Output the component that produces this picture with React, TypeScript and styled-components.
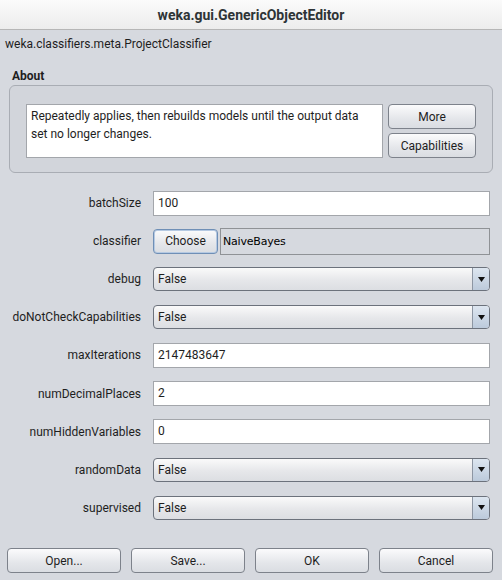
import React from 'react';
import styled, { createGlobalStyle } from 'styled-components';

const GlobalStyle = createGlobalStyle`
  html, body {
    margin: 0;
    padding: 0;
    background: #d6d9df;
  }
  body {
    font-family: Roboto, "Liberation Sans", sans-serif;
    font-size: 12px;
    color: #1e1e1e;
  }
`

const Window = styled.div`
  width: 502px;
  height: 580px;
  display: flex;
  flex-direction: column;
  background: #d6d9df;
  overflow: hidden;
`
const TitleBar = styled.div`
  height: 29px;
  flex-shrink: 0;
  display: flex;
  align-items: center;
  justify-content: center;
  background: linear-gradient(#fbfbfb, #ececec);
  border-bottom: 1px solid #b6b6b6;
  font-weight: bold;
  font-size: 14px;
  color: #2e3436;
`
const ClassName = styled.div`
  height: 15px;
  line-height: 15px;
  margin-top: 7px;
  padding-left: 5px;
`
const SectionTitle = styled.div`
  margin-top: 17px;
  padding-left: 12px;
  font-weight: bold;
  height: 15px;
  line-height: 15px;
`
const AboutBox = styled.div`
  margin: 1px 9px 0 9px;
  height: 88px;
  box-sizing: border-box;
  border: 1px solid #a9adb4;
  border-radius: 6px;
  background: #d2d5db;
  display: flex;
  gap: 5px;
  padding: 18px 16px 0 16px;
`
const AboutText = styled.div`
  width: 357px;
  height: 54px;
  box-sizing: border-box;
  background: #fff;
  border: 1px solid #a3a6ab;
  padding: 2px 12px 0 4px;
  line-height: 18px;
`
const ButtonColumn = styled.div`
  display: flex;
  flex-direction: column;
  gap: 4px;
`
const Button = styled.button<{ $w?: number; $focused?: boolean }>`
  width: ${p => p.$w ?? 88}px;
  height: 25px;
  box-sizing: border-box;
  padding: 0;
  font-family: Roboto, "Liberation Sans", sans-serif;
  font-size: 12px;
  color: #1e1e1e;
  border: 1px solid ${p => (p.$focused ? '#6f8fb6' : '#7d828b')};
  box-shadow: ${p => (p.$focused ? 'inset 0 0 0 1px #b5c9e2' : 'none')};
  border-radius: 4px;
  background: linear-gradient(#fbfbfc, #e4e6ea 60%, #dadde2);
`
const PropGrid = styled.div`
  margin-top: 11px;
  display: grid;
  grid-template-columns: 141px 1fr;
  column-gap: 12px;
  grid-auto-rows: 38.1px;
  align-items: center;
  padding-right: 12px;
`
const Label = styled.div`
  text-align: right;
  white-space: nowrap;
`
const TextField = styled.div`
  height: 25px;
  box-sizing: border-box;
  background: #fff;
  border: 1px solid #a3a6ab;
  padding: 0 4px;
  line-height: 23px;
`
const ChooserRow = styled.div`
  display: flex;
  gap: 2px;
  align-items: center;
`
const ObjectField = styled.div`
  flex: 1;
  height: 27px;
  box-sizing: border-box;
  border: 1px solid #8f9296;
  background: #d6d9df;
  padding-left: 2px;
  line-height: 25px;
  font-family: "DejaVu Sans", sans-serif;
  font-size: 11px;
  letter-spacing: -0.2px;
  color: #000;
`
const Combo = styled.div`
  height: 24px;
  box-sizing: border-box;
  border: 1px solid #6c727c;
  border-radius: 4px;
  background: linear-gradient(#fafafa, #e6e7ea 55%, #dcdee2);
  display: flex;
  align-items: center;
  overflow: hidden;
`
const ComboText = styled.div`
  flex: 1;
  padding-left: 4px;
`
const ComboArrow = styled.div`
  width: 16px;
  height: 100%;
  border-left: 1px solid #8d96a3;
  background: linear-gradient(#dde6f0, #bccadb);
  display: flex;
  align-items: center;
  justify-content: center;
`
const Footer = styled.div`
  margin-top: auto;
  margin-bottom: 7px;
  padding: 0 9px 0 7px;
  display: flex;
  gap: 10px;
`

const Arrow = () => (
  <svg width="7" height="5" viewBox="0 0 7 5">
    <path d="M0 0H7L3.5 5Z" fill="#111" />
  </svg>
)

type Prop = { name: string; kind: 'text' | 'combo' | 'object'; value: string };

const props: Prop[] = [
  { name: 'batchSize', kind: 'text', value: '100' },
  { name: 'classifier', kind: 'object', value: 'NaiveBayes' },
  { name: 'debug', kind: 'combo', value: 'False' },
  { name: 'doNotCheckCapabilities', kind: 'combo', value: 'False' },
  { name: 'maxIterations', kind: 'text', value: '2147483647' },
  { name: 'numDecimalPlaces', kind: 'text', value: '2' },
  { name: 'numHiddenVariables', kind: 'text', value: '0' },
  { name: 'randomData', kind: 'combo', value: 'False' },
  { name: 'supervised', kind: 'combo', value: 'False' },
]

const Editor = (p: Prop) => {
  if (p.kind === 'text') return <TextField>{p.value}</TextField>
  if (p.kind === 'combo')
    return (
      <Combo>
        <ComboText>{p.value}</ComboText>
        <ComboArrow><Arrow /></ComboArrow>
      </Combo>
    )
  return (
    <ChooserRow>
      <Button $w={65} $focused>Choose</Button>
      <ObjectField>{p.value}</ObjectField>
    </ChooserRow>
  )
}

const App = () => {
  return (
    <Window>
      <GlobalStyle />
      <TitleBar>weka.gui.GenericObjectEditor</TitleBar>
      <ClassName>weka.classifiers.meta.ProjectClassifier</ClassName>
      <SectionTitle>About</SectionTitle>
      <AboutBox>
        <AboutText>
          Repeatedly applies, then rebuilds models until the output data set no longer changes.
        </AboutText>
        <ButtonColumn>
          <Button>More</Button>
          <Button>Capabilities</Button>
        </ButtonColumn>
      </AboutBox>
      <PropGrid>
        {props.map(p => (
          <React.Fragment key={p.name}>
            <Label>{p.name}</Label>
            <Editor {...p} />
          </React.Fragment>
        ))}
      </PropGrid>
      <Footer>
        <Button $w={114}>Open...</Button>
        <Button $w={114}>Save...</Button>
        <Button $w={114}>OK</Button>
        <Button $w={114}>Cancel</Button>
      </Footer>
    </Window>
  )
}

export default App
